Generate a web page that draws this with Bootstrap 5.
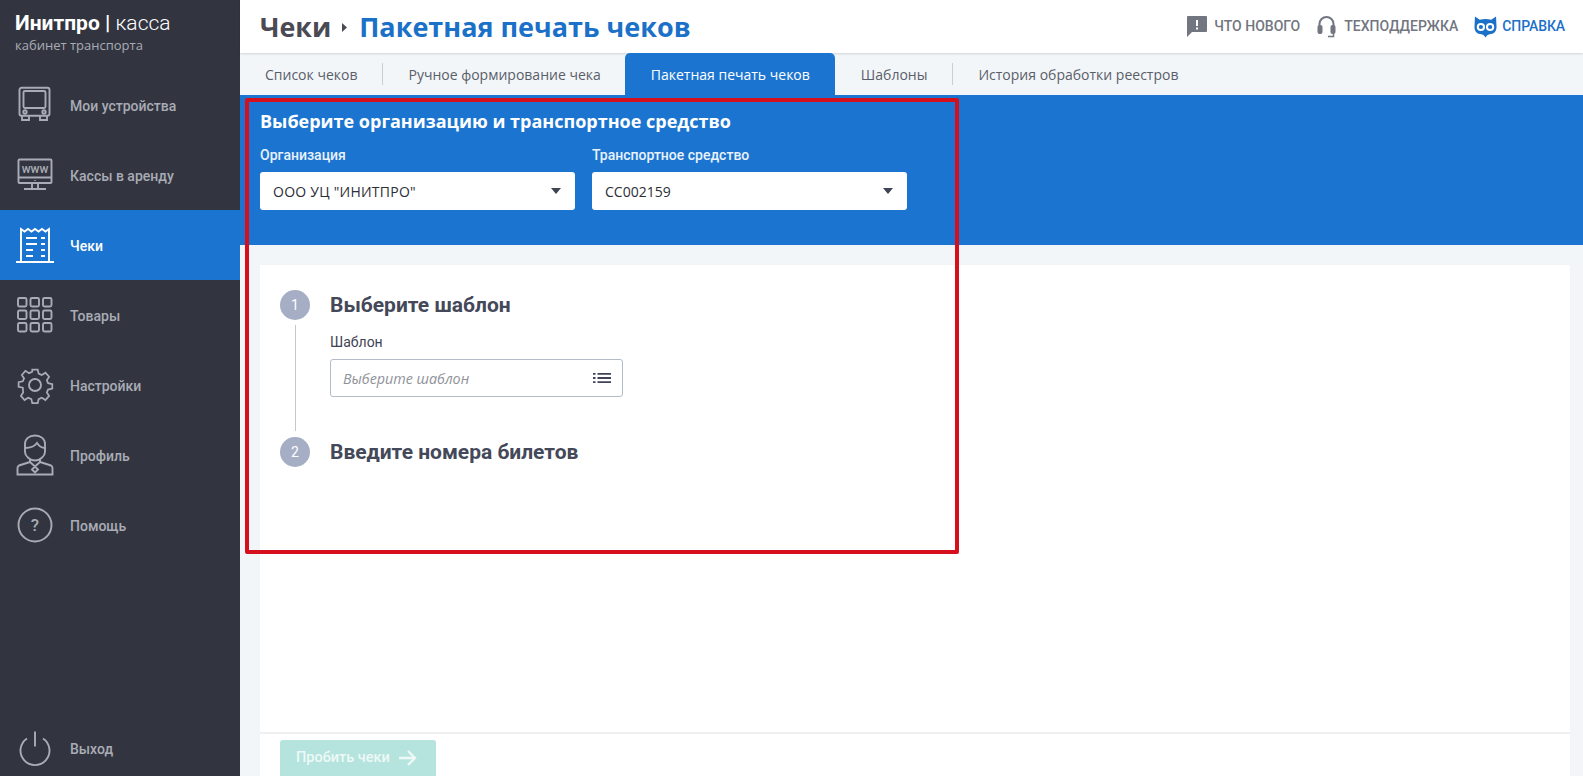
<!DOCTYPE html>
<html lang="ru">
<head>
<meta charset="utf-8">
<title>Пакетная печать чеков</title>
<link rel="stylesheet" href="https://cdn.jsdelivr.net/npm/bootstrap@5.3.0/dist/css/bootstrap.min.css">
<style>
html,body{height:100%;overflow:hidden}
body{font-family:"Open Sans","Liberation Sans",sans-serif;background:#f3f6f9;color:#3f4354;font-size:14px}
.app-shell{height:776px;position:relative}
.side{width:240px;background:#323540;flex:none;font-family:Roboto,"Liberation Sans",sans-serif}
.brand{height:70px;padding:12px 0 0 15px;color:#fff}
.brand-name{font-family:Roboto,"Liberation Sans",sans-serif;font-size:21px;line-height:23px;font-weight:700}
.brand-name span{font-weight:300}
.brand-sub{font-family:"Open Sans","Liberation Sans",sans-serif;font-size:13px;line-height:18px;margin-top:1px;color:#a9acb5}
.side-item{height:70px;padding-left:16px;color:#a9acb5;font-size:14px;font-weight:500;text-decoration:none}
.side-item span{padding-top:2px}
.side-item.last span{padding-top:0}
.side-item svg{width:38px;height:38px;flex:none;margin-right:16px;fill:none;stroke:#a9acb5;stroke-width:1.9}
.side-item.on{background:#1b75d0;color:#fff}
.side-item.on svg{stroke:#fff}
.side-item.last{height:54px}
.top{height:53px;background:#fff;box-shadow:0 1px 2px rgba(0,0,0,.14);position:relative;padding:0 18px 0 20px}
.crumb{font-size:26.800px;font-weight:700;line-height:51px;color:#4a4a55}
.crumb b{color:#1b70c8;font-weight:700;font-size:27px}
.crumb svg{width:7px;height:11px;margin:2px 11px 0 10px;fill:#4a4a55}
.top-link{font-family:Roboto,"Liberation Sans",sans-serif;font-size:14px;font-weight:500;color:#727680;text-decoration:none;margin-left:17px}
.top-link:first-child svg{margin-right:7px}
.top-link.hl{color:#1b70c8;margin-left:16px;letter-spacing:-.1px}
.top-link svg{margin-right:8px;flex:none}
.top-link.hl svg{margin-right:5px}
.tabbar{height:42px;background:#f3f6f9}
.tab-link{height:42px;padding:0 26px 0 25px;color:#5a5e69;font-size:14px;text-decoration:none;position:relative}
.tab-link.sep::after{content:"";position:absolute;right:0;top:10px;height:22px;width:1px;background:#c9ced4}
.tab-link.tight{padding-right:24px}
.tab-link.wide{padding-left:26px}
.tab-link.on{background:#1b75d0;color:#fff;border-radius:5px 5px 0 0;padding:0 25px 0 26px}
.bluebox{height:150px;background:#1b75d0;color:#fff;padding:14px 20px 0}
.bluebox h2{font-size:18px;line-height:24px;font-weight:700;margin:0 0 14px}
.pick-col{width:315px}
.pick-label{font-family:Roboto,"Liberation Sans",sans-serif;font-size:14px;font-weight:500;line-height:17px;margin-bottom:8px;color:#e9f2fb}
.pick{height:38px;background:#fff;border-radius:3px;color:#2c2e36;font-size:14px;padding:0 13px}
.org-name{letter-spacing:.25px}
.caret-down{width:0;height:0;border-left:5.500px solid transparent;border-right:5.500px solid transparent;border-top:6px solid #3f4354;margin-right:1px}
.sheet{margin:20px 13px 0 20px;background:#fff;flex:1 1 auto;min-height:0;box-shadow:0 0 1px rgba(0,0,0,.04)}
.sheet-body{flex:1 1 auto;padding:25px 20px 0}
.step-dot{width:30px;height:30px;border-radius:50%;background:#a5aec4;color:#fff;font-size:14px;flex:none;font-family:Roboto,"Liberation Sans",sans-serif}
.step-rail{width:30px;flex:none;margin-right:20px}
.step-line{width:1px;height:106px;background:#c6c8cc;margin:5px auto 6px}
.step-title{font-family:Roboto,"Liberation Sans",sans-serif;font-size:21px;font-weight:700;line-height:30px;color:#444859;margin:0}
.field-label{font-family:Roboto,"Liberation Sans",sans-serif;font-size:14px;line-height:17px;margin:14px 0 8px;color:#3f4354}
.field-box{width:293px;height:38px;border:1px solid #b3bcc9;border-radius:3px;padding:0 11px 0 12px;font-style:italic;font-size:14.300px;color:#8f9299}
.field-box span{padding-top:2px}
.sheet-foot{height:44px;border-top:2px solid #eff0f2;padding:6px 20px 0}
.go-btn{width:156px;height:44px;background:#b4e4dd;border:0;border-radius:3px 3px 0 0;color:#eef9f7;font-family:Roboto,"Liberation Sans",sans-serif;font-size:14.500px;font-weight:500;padding:0 0 8px 16px}
.go-btn svg{margin-left:9px}
.mark-frame{position:absolute;left:245px;top:98px;width:714px;height:456px;border:4px solid #d60f1c;border-radius:2px;pointer-events:none}
</style>
</head>
<body>
<div class="app-shell d-flex">
  <nav class="side d-flex flex-column">
    <div class="brand">
      <div class="brand-name">Инитпро | <span>касса</span></div>
      <div class="brand-sub">кабинет транспорта</div>
    </div>
    <a class="side-item d-flex align-items-center" href="#"><svg viewBox="0 0 38 38"><rect x="3.500" y="1.800" width="30" height="28" rx="2"/><rect x="7.500" y="5" width="22" height="17" rx="1.500"/><circle cx="9" cy="26" r="1.700"/><circle cx="28" cy="26" r="1.700"/><path d="M6 30v4h7v-4M24 30v4h7v-4"/></svg><span>Мои устройства</span></a>
    <a class="side-item d-flex align-items-center" href="#"><svg viewBox="0 0 38 38"><rect x="2.500" y="3.500" width="33" height="23.500" rx="1"/><path d="M2.500 21.500h33M19 24v.8M16 27v5M22 27v5M8 33h22"/><text x="19" y="17" font-size="12" text-anchor="middle" fill="#a9acb5" stroke="none" font-family="Roboto,sans-serif">www</text></svg><span>Кассы в аренду</span></a>
    <a class="side-item on d-flex align-items-center" href="#"><svg viewBox="0 0 38 38"><path d="M0 36h38M5 36V3l3.500 2.500L12 3l3.500 2.500L19 3l3.500 2.500L26 3l3.500 2.500L33 3v33"/><path d="M10 12h11M25 12h4M10 18h11M25 18h4M10 24h7M25 24h4M10 30h7M25 30h4"/></svg><span>Чеки</span></a>
    <a class="side-item d-flex align-items-center" href="#"><svg viewBox="0 0 38 38"><rect x="2" y="2" width="8.500" height="8.500" rx="1.500"/><rect x="14.500" y="2" width="8.500" height="8.500" rx="1.500"/><rect x="27" y="2" width="8.500" height="8.500" rx="1.500"/><rect x="2" y="14.500" width="8.500" height="8.500" rx="1.500"/><rect x="14.500" y="14.500" width="8.500" height="8.500" rx="1.500"/><rect x="27" y="14.500" width="8.500" height="8.500" rx="1.500"/><rect x="2" y="27" width="8.500" height="8.500" rx="1.500"/><rect x="14.500" y="27" width="8.500" height="8.500" rx="1.500"/><rect x="27" y="27" width="8.500" height="8.500" rx="1.500"/></svg><span>Товары</span></a>
    <a class="side-item d-flex align-items-center" href="#"><svg viewBox="0 0 38 38"><circle cx="19" cy="19" r="6"/><path d="M16 2h6l1 4.500 3.500 1.500 4-2.500 4 4.500-2.500 3.800 1.400 3.200 4.600 1v5l-4.600 1-1.400 3.200 2.500 3.800-4 4.500-4-2.500-3.500 1.500-1 4.500h-6l-1-4.500-3.500-1.500-4 2.500-4-4.500 2.500-3.800L5.600 22 1 21v-5l4.600-1L7 11.800 4.500 8l4-4.500 4 2.500L16 4.500z" transform="translate(1.700 1.700) scale(.91)"/></svg><span>Настройки</span></a>
    <a class="side-item d-flex align-items-center" href="#"><svg viewBox="0 0 38 42" style="height:42px"><path d="M9 10c0-5 4-8.500 10-8.500S29 5 29 10v8c0 4-5 8.500-10 8.500S9 22 9 18z"/><path d="M9 14c5 0 9-1 12-5 2 3 5 5 8 5M14 25v3l-11 3.500c-1 .5-1.500 1-1.500 2.500v6.500h35V34c0-1.500-.5-2-1.500-2.500L24 28v-3"/><path d="M14 28l5 4.500 5-4.500M19 32.500l-3 3 3 3 3-3z"/></svg><span>Профиль</span></a>
    <a class="side-item d-flex align-items-center" href="#"><svg viewBox="0 0 38 38"><circle cx="19" cy="19" r="16.500"/><text x="19" y="25" font-size="17" text-anchor="middle" fill="#a9acb5" stroke="none" font-family="Roboto,sans-serif">?</text></svg><span>Помощь</span></a>
    <a class="side-item last mt-auto d-flex align-items-center" href="#"><svg viewBox="0 0 38 38"><path d="M19 1.500v15M11 8.500a14.500 14.500 0 1 0 16 0"/></svg><span>Выход</span></a>
  </nav>
  <main class="flex-grow-1 d-flex flex-column" style="min-width:0">
    <header class="top d-flex align-items-center justify-content-between">
      <div class="crumb d-flex align-items-center">Чеки<svg viewBox="0 0 7 11"><path d="M1 1l5 4.500-5 4.500z"/></svg><b>Пакетная печать чеков</b></div>
      <div class="d-flex align-items-center">
        <a class="top-link d-flex align-items-center" href="#"><svg width="20" height="21" viewBox="0 0 20 21"><path fill="#727680" d="M1 0h18a1 1 0 0 1 1 1v14a1 1 0 0 1-1 1H5l-5 5V1a1 1 0 0 1 1-1z"/><path fill="#fff" d="M9 4h2v6H9zM9 11.500h2v2H9z"/></svg>ЧТО НОВОГО</a>
        <a class="top-link d-flex align-items-center" href="#"><svg width="19" height="23" viewBox="0 0 19 23"><path fill="none" stroke="#727680" stroke-width="2" d="M2.500 12V9a7 7 0 0 1 14 0v3"/><rect x="0.500" y="10" width="5" height="9" rx="2" fill="#727680"/><rect x="13.500" y="10" width="5" height="9" rx="2" fill="#727680"/><path fill="none" stroke="#727680" stroke-width="1.500" d="M16.500 19v2.500H11"/></svg>ТЕХПОДДЕРЖКА</a>
        <a class="top-link hl d-flex align-items-center" href="#"><svg width="23" height="22" viewBox="0 0 24 22"><path fill="#1b70c8" d="M1 0l5 3.500c3.500-1.300 8.500-1.300 12 0L23 0l.5 11c0 5-3.500 7.500-7 7.500-1.500 0-3 1-4.500 3.500-1.500-2.500-3-3.500-4.500-3.500-3.500 0-7-2.500-7-7.500z"/><circle cx="7.200" cy="11" r="4.300" fill="#fff"/><circle cx="16.800" cy="11" r="4.300" fill="#fff"/><circle cx="7.200" cy="11" r="2.200" fill="#1b70c8"/><circle cx="16.800" cy="11" r="2.200" fill="#1b70c8"/></svg>СПРАВКА</a>
      </div>
    </header>
    <div class="tabbar d-flex">
      <a class="tab-link sep d-flex align-items-center" href="#">Список чеков</a>
      <a class="tab-link tight d-flex align-items-center" href="#">Ручное формирование чека</a>
      <a class="tab-link on d-flex align-items-center" href="#">Пакетная печать чеков</a>
      <a class="tab-link wide sep d-flex align-items-center" href="#">Шаблоны</a>
      <a class="tab-link d-flex align-items-center" href="#">История обработки реестров</a>
    </div>
    <section class="bluebox">
      <h2>Выберите организацию и транспортное средство</h2>
      <div class="d-flex" style="gap:17px">
        <div class="pick-col">
          <div class="pick-label">Организация</div>
          <div class="pick d-flex align-items-center justify-content-between"><span class="org-name">ООО УЦ "ИНИТПРО"</span><span class="caret-down"></span></div>
        </div>
        <div class="pick-col">
          <div class="pick-label">Транспортное средство</div>
          <div class="pick d-flex align-items-center justify-content-between"><span>СС002159</span><span class="caret-down"></span></div>
        </div>
      </div>
    </section>
    <section class="sheet d-flex flex-column">
      <div class="sheet-body d-flex">
        <div class="step-rail">
          <div class="step-dot d-flex align-items-center justify-content-center">1</div>
          <div class="step-line"></div>
          <div class="step-dot d-flex align-items-center justify-content-center">2</div>
        </div>
        <div>
          <h3 class="step-title">Выберите шаблон</h3>
          <div class="field-label">Шаблон</div>
          <div class="field-box d-flex align-items-center justify-content-between"><span>Выберите шаблон</span>
            <svg width="18" height="10" viewBox="0 0 18 10"><path fill="#3f4354" d="M0 0h2.500v1.800H0zM4.500 0H18v1.800H4.500zM0 4.100h2.500v1.800H0zM4.500 4.100H18v1.800H4.500zM0 8.200h2.500V10H0zM4.500 8.200H18V10H4.500z"/></svg></div>
          <h3 class="step-title" style="margin-top:40px">Введите номера билетов</h3>
        </div>
      </div>
      <div class="sheet-foot">
        <button class="go-btn d-flex align-items-center" type="button" disabled>Пробить чеки<svg width="18" height="16" viewBox="0 0 18 16"><path fill="none" stroke="#eef9f7" stroke-width="2.400" d="M0 8h16M9 1l7 7-7 7"/></svg></button>
      </div>
    </section>
  </main>
  <div class="mark-frame"></div>
</div>
<script src="https://cdn.jsdelivr.net/npm/bootstrap@5.3.0/dist/js/bootstrap.bundle.min.js"></script>
</body>
</html>
